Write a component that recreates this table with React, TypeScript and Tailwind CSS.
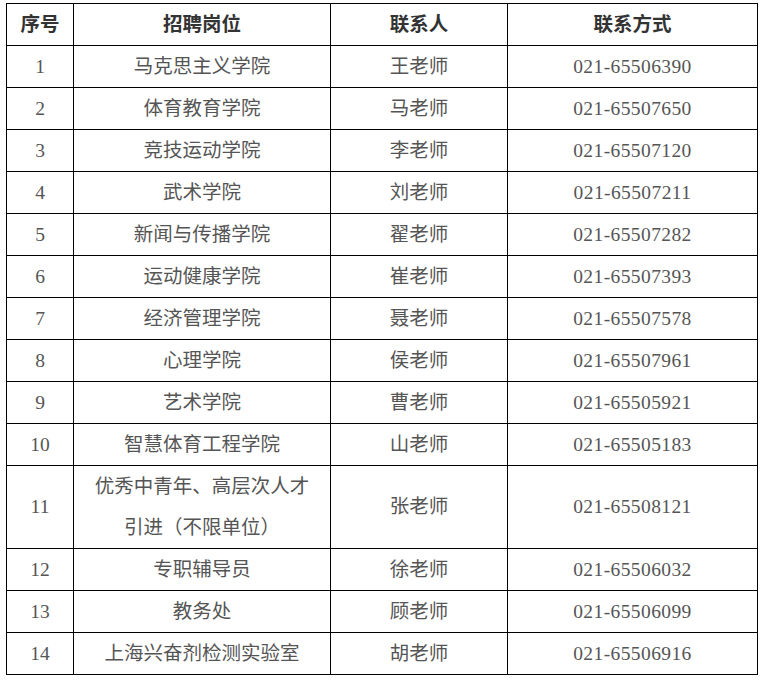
const rows = [
  { no: "1", post: ["马克思主义学院"], contact: "王老师", phone: "021-65506390" },
  { no: "2", post: ["体育教育学院"], contact: "马老师", phone: "021-65507650" },
  { no: "3", post: ["竞技运动学院"], contact: "李老师", phone: "021-65507120" },
  { no: "4", post: ["武术学院"], contact: "刘老师", phone: "021-65507211" },
  { no: "5", post: ["新闻与传播学院"], contact: "翟老师", phone: "021-65507282" },
  { no: "6", post: ["运动健康学院"], contact: "崔老师", phone: "021-65507393" },
  { no: "7", post: ["经济管理学院"], contact: "聂老师", phone: "021-65507578" },
  { no: "8", post: ["心理学院"], contact: "侯老师", phone: "021-65507961" },
  { no: "9", post: ["艺术学院"], contact: "曹老师", phone: "021-65505921" },
  { no: "10", post: ["智慧体育工程学院"], contact: "山老师", phone: "021-65505183" },
  {
    no: "11",
    post: ["优秀中青年、高层次人才", "引进（不限单位）"],
    contact: "张老师",
    phone: "021-65508121",
  },
  { no: "12", post: ["专职辅导员"], contact: "徐老师", phone: "021-65506032" },
  { no: "13", post: ["教务处"], contact: "顾老师", phone: "021-65506099" },
  { no: "14", post: ["上海兴奋剂检测实验室"], contact: "胡老师", phone: "021-65506916" },
];

const font = "font-['Liberation_Serif','Noto_Sans_CJK_SC',serif]";

export default function App() {
  return (
    <div className={`min-h-[683px] w-[763px] bg-white pl-[6px] pt-[3px] ${font}`}>
      <table className="w-[751px] table-fixed border-collapse text-center text-[19.5px] leading-none">
        <colgroup>
          <col className="w-[67px]" />
          <col className="w-[257px]" />
          <col className="w-[177px]" />
          <col className="w-[250px]" />
        </colgroup>
        <thead>
          <tr className="h-[42px] font-bold text-[#333]">
            <th className="border border-black p-0">序号</th>
            <th className="border border-black p-0">招聘岗位</th>
            <th className="border border-black p-0">联系人</th>
            <th className="border border-black p-0">联系方式</th>
          </tr>
        </thead>
        <tbody className="text-[#555]">
          {rows.map((row) => (
            <tr key={row.no} className={row.post.length > 1 ? "h-[83px]" : "h-[42px]"}>
              <td className="border border-black p-0">{row.no}</td>
              <td className="border border-black p-0">
                {row.post.map((line) => (
                  <div key={line} className={row.post.length > 1 ? "leading-[41px]" : ""}>
                    {line}
                  </div>
                ))}
              </td>
              <td className="border border-black p-0">{row.contact}</td>
              <td className="border border-black p-0 tracking-[0.4px]">{row.phone}</td>
            </tr>
          ))}
        </tbody>
      </table>
    </div>
  );
}
